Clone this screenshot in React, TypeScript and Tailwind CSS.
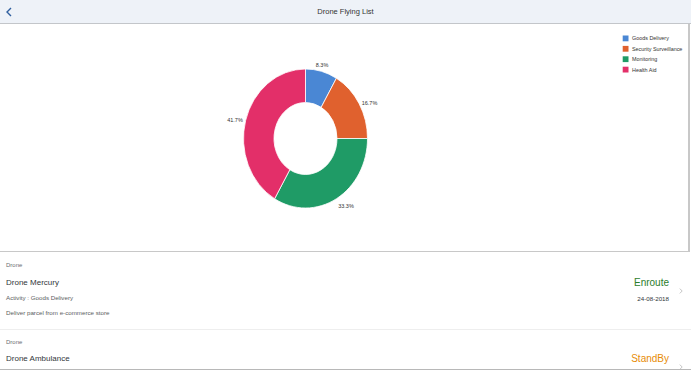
import React from "react";

interface Slice {
  label: string;
  value: number;
  color: string;
  tx: number;
  ty: number;
}

const slices: Slice[] = [
  { label: "Goods Delivery", value: 8.3, color: "#4a87d4", tx: 322, ty: 40.5 },
  { label: "Security Surveillance", value: 16.7, color: "#e0612e", tx: 369.5, ty: 78.5 },
  { label: "Monitoring", value: 33.3, color: "#1f9b66", tx: 346, ty: 182 },
  { label: "Health Aid", value: 41.7, color: "#e32f69", tx: 235, ty: 96 },
];

const cx = 305.5;
const cy = 114.5;
const rx = 62;
const ry = 69.5;
const irx = 31.5;
const iry = 36;

function pt(a: number, x: number, y: number) {
  const r = (a * Math.PI) / 180;
  return [cx + x * Math.sin(r), cy - y * Math.cos(r)];
}

function arc(start: number, end: number) {
  const large = end - start > 180 ? 1 : 0;
  const [x1, y1] = pt(start, rx, ry);
  const [x2, y2] = pt(end, rx, ry);
  const [x3, y3] = pt(end, irx, iry);
  const [x4, y4] = pt(start, irx, iry);
  return `M${x1} ${y1} A${rx} ${ry} 0 ${large} 1 ${x2} ${y2} L${x3} ${y3} A${irx} ${iry} 0 ${large} 0 ${x4} ${y4} Z`;
}

function Donut() {
  let acc = 0;
  return (
    <svg width="688" height="227" className="block">
      {slices.map((s) => {
        const start = (acc / 100) * 360;
        acc += s.value;
        const end = (acc / 100) * 360;
        return <path key={s.label} d={arc(start, end)} fill={s.color} stroke="#fff" strokeWidth="0.8" />;
      })}
      {slices.map((s) => (
        <text
          key={s.label + "t"}
          x={s.tx}
          y={s.ty}
          fontSize="5.5"
          fill="#333"
          textAnchor="middle"
          dominantBaseline="central"
          fontFamily="Liberation Sans, Arial, sans-serif"
        >
          {s.value}%
        </text>
      ))}
      {slices.map((s, i) => (
        <g key={s.label + "l"}>
          <rect x="622.7" y={11.5 + i * 10.4} width="5.8" height="5.8" fill={s.color} />
          <text
            x="632"
            y={14.4 + i * 10.4}
            fontSize="5.4"
            fill="#333"
            dominantBaseline="central"
            fontFamily="Liberation Sans, Arial, sans-serif"
          >
            {s.label}
          </text>
        </g>
      ))}
    </svg>
  );
}

function Chevron() {
  return (
    <svg width="4" height="6" viewBox="0 0 4 6" className="block">
      <polyline points="0.8,0.6 3.2,3 0.8,5.4" fill="none" stroke="#b5b5b5" strokeWidth="0.8" />
    </svg>
  );
}

function App() {
  return (
    <div className="w-[691px] h-[371px] overflow-hidden bg-white font-['Liberation_Sans',Arial,sans-serif]">
      <div className="relative h-6 bg-[#eef2f8] border-b border-[#c3c6ca] flex items-center justify-center">
        <svg width="8" height="12" viewBox="0 0 8 12" className="absolute left-[5px] top-[6px]">
          <polyline points="6,2 2,6 6,10" fill="none" stroke="#2f5f9f" strokeWidth="1.4" />
        </svg>
        <span className="text-[7.5px] text-[#333]">Drone Flying List</span>
      </div>
      <div className="w-[690px] h-[228px] border-r-2 border-b border-[#c8c8c8]">
        <Donut />
      </div>
      <div className="h-[118px] overflow-hidden border-b border-[#b8b8b8]">
        <div className="h-[78px] flex border-b border-[#eeeeee]">
          <div className="flex-1 pl-[6px] pt-[8px]">
            <div className="text-[6px] leading-[10px] text-[#6a6d70]">Drone</div>
            <div className="mt-[7.5px] text-[8px] leading-[10px] text-[#32363a]">Drone Mercury</div>
            <div className="mt-[5.5px] text-[6.2px] leading-[10px] text-[#5a5d60]">Activity : Goods Delivery</div>
            <div className="mt-[5px] text-[6.2px] leading-[10px] text-[#5a5d60]">Deliver parcel from e-commerce store</div>
          </div>
          <div className="pt-[25px] text-right">
            <div className="text-[10px] leading-[12px] text-[#2b7d2b]">Enroute</div>
            <div className="mt-[5px] text-[6.2px] leading-[10px] text-[#32363a]">24-08-2018</div>
          </div>
          <div className="w-[22px] flex items-center justify-center pl-[1px]">
            <Chevron />
          </div>
        </div>
        <div className="h-[74px] flex">
          <div className="flex-1 pl-[6px] pt-[7px]">
            <div className="text-[6px] leading-[10px] text-[#6a6d70]">Drone</div>
            <div className="mt-[7px] text-[8px] leading-[10px] text-[#32363a]">Drone Ambulance</div>
          </div>
          <div className="pt-[23px] text-right">
            <div className="text-[10px] leading-[12px] text-[#e78c07]">StandBy</div>
          </div>
          <div className="w-[22px] flex items-center justify-center pl-[1px]">
            <Chevron />
          </div>
        </div>
      </div>
    </div>
  );
}

export default App;
